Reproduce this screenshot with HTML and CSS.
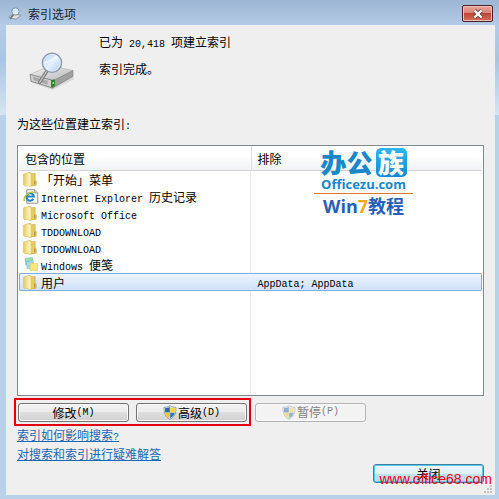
FILE: index.html
```html
<!DOCTYPE html>
<html lang="zh-CN">
<head>
<meta charset="utf-8">
<title>索引选项</title>
<link rel="stylesheet" href="styles.css">
</head>
<body>
<svg class="defs" aria-hidden="true">
  <defs>
    <linearGradient id="fold" x1="0" x2="1" y1="0" y2="0">
      <stop offset="0" stop-color="#e6cd62"/><stop offset=".55" stop-color="#f6e79a"/><stop offset="1" stop-color="#d3b142"/>
    </linearGradient>
    <linearGradient id="metal" x1="0" x2="1" y1="0" y2="1">
      <stop offset="0" stop-color="#f6f6f6"/><stop offset="1" stop-color="#b4b4b4"/>
    </linearGradient>
    <linearGradient id="glass" x1="0" x2="1" y1="0" y2="1">
      <stop offset="0" stop-color="#b5cdf0"/><stop offset=".5" stop-color="#e6f1fc"/><stop offset="1" stop-color="#a9c9ee"/>
    </linearGradient>
    <symbol id="folder" viewBox="1.5 .5 13 15.5" preserveAspectRatio="none">
      <path d="M2 2.500 8 .8l.8.7v13.200L3 14.500l-1-.9z" fill="url(#fold)" stroke="#d6bd5f" stroke-width=".6"/>
      <path d="M7.500 2.500 12.800 2v7l1 .5v4.600l-6.300 1.300z" fill="#e8cb5e" stroke="#c8a845" stroke-width=".6"/>
      <path d="M6.400 1.500 8.600 2v13.400l-2.200-1.200z" fill="#fbf3c5"/>
      <path d="M12.400 9.500v4" stroke="#9c8544" stroke-width=".9"/>
    </symbol>
    <symbol id="drive" viewBox="0 0 48 40">
      <path d="M2 28 24 36 47 25v3L25 39 3 31z" fill="#c9c9c9" opacity=".6"/>
      <path d="M2 23 23 14l23 5-21 11z" fill="url(#metal)" stroke="#b0b0b0" stroke-width=".6"/>
      <path d="m2 23 23 6v8L3 30z" fill="#d0d0d0" stroke="#777" stroke-width=".8"/>
      <path d="m5 25.500 15 4v4L6 29z" fill="#a8a8a8"/>
      <path d="m25 30 21-11v6L25 37z" fill="#a0a0a0" stroke="#777" stroke-width=".6"/>
      <path d="m23.500 29 4-1v7l-4 1.500z" fill="#26852d"/>
      <path d="m25 31 1.500-.5v2l-1.500.5z" fill="#9cf086"/>
      <path d="m19 20-7 11" stroke="#777" stroke-width="3.400" stroke-linecap="round"/>
      <path d="m19 20-7 11" stroke="#c8c8c8" stroke-width="1.400" stroke-linecap="round"/>
      <circle cx="24.500" cy="11" r="9.800" fill="url(#glass)" stroke="#8b9aab" stroke-width="1.600"/>
      <path d="M17 11c4-1 9-3 13-7" stroke="#fff" stroke-width="2" fill="none" opacity=".6"/>
      <circle cx="24.500" cy="11" r="8.600" fill="none" stroke="#e8f2fb" stroke-width=".7"/>
    </symbol>
    <symbol id="shield" viewBox="0 0 14 15">
      <path d="M7 .7C5 2 3 2.300 1 2.300c0 6 1 9.500 6 12 5-2.500 6-6 6-12-2 0-4-.3-6-1.600z" fill="#e8edf0" stroke="#80909b" stroke-width=".8"/>
      <path d="M6.800 2v5.500H2.200C2 6 2 4.500 2 3.200 4 3.100 5.500 2.700 6.800 2z" fill="#2866b7"/>
      <path d="M7.200 2v5.500h4.600c.2-1.500.2-3 .2-4.300-2-.1-3.500-.5-4.800-1.200z" fill="#f3d53d"/>
      <path d="M6.800 7.700v5.500C4 11.700 2.600 10 2.200 7.700z" fill="#f0c32f"/>
      <path d="M7.200 7.700v5.500c2.800-1.500 4.200-3.200 4.600-5.500z" fill="#3272be"/>
    </symbol>
  </defs>
</svg>

<div class="window">
  <header class="titlebar">
    <svg class="title-icon" viewBox="0 0 14 13"><path d="M1 9.500 7 7l6 1.500-5 3.700-7-1.500z" fill="#dedede" stroke="#8a8f96" stroke-width=".8"/><path d="m5.500 7.500-3 4" stroke="#6e747c" stroke-width="1.500" stroke-linecap="round"/><circle cx="7.500" cy="4.500" r="3.700" fill="#dcebfa" stroke="#7f90a5"/></svg>
    <h1>索引选项</h1>
    <button class="close-x" aria-label="关闭窗口">
      <svg viewBox="0 0 12 10" width="12" height="10"><path d="m2.500 1.500 7 7m0-7-7 7" stroke="#684450" stroke-width="4"/><path d="m2.500 1.500 7 7m0-7-7 7" stroke="#fff" stroke-width="2.400"/></svg>
    </button>
  </header>

  <main class="client">
    <section class="status">
      <svg class="drive"><use href="#drive"/></svg>
      <div>
        <p>已为<span class="en"> 20,418 </span>项建立索引</p>
        <p>索引完成。</p>
      </div>
    </section>

    <h2 id="locations">为这些位置建立索引<span class="en">:</span></h2>

    <div class="list">
      <table aria-labelledby="locations">
        <thead><tr><th>包含的位置</th><th>排除</th></tr></thead>
        <tbody>
          <tr><td><svg class="icon folder"><use href="#folder"/></svg>「开始」菜单</td><td></td></tr>
          <tr><td><svg class="icon" viewBox="0 0 16 16"><path d="M3.500.8h8.700l3 3v11.400H3.500z" fill="#fff" stroke="#8c8c8c"/><path d="M12 .8v3.400h3.200" fill="#eee" stroke="#8c8c8c"/><path d="M10.500 10.500A4 4 0 1 1 11 8H4" fill="none" stroke="#2585c5" stroke-width="2.200"/><path d="M1 13C-1 8 6 2 11.500 3.500" fill="none" stroke="#b7cb38" stroke-width="1.400"/></svg><span class="en">Internet Explorer </span>历史记录</td><td></td></tr>
          <tr><td><svg class="icon folder"><use href="#folder"/></svg><span class="en">Microsoft Office</span></td><td></td></tr>
          <tr><td><svg class="icon folder"><use href="#folder"/></svg><span class="en">TDDOWNLOAD</span></td><td></td></tr>
          <tr><td><svg class="icon folder"><use href="#folder"/></svg><span class="en">TDDOWNLOAD</span></td><td></td></tr>
          <tr><td><svg class="icon" viewBox="0 0 16 16"><path d="m1.500 1.500 8-1 1 7-8 1z" fill="#94dcb1" stroke="#6fc294" stroke-width=".6"/><path d="m3 5 7-1 1 7.500-7 1z" fill="#a7d7f2" stroke="#76b3d8" stroke-width=".6"/><path d="m7.500 6.500 7.500.5v7.500l-8-.5z" fill="#f7e680" stroke="#dcc65a" stroke-width=".6"/></svg><span class="en">Windows </span>便笺</td><td></td></tr>
          <tr class="selected"><td><svg class="icon folder"><use href="#folder"/></svg>用户</td><td><span class="en">AppData; AppData</span></td></tr>
        </tbody>
      </table>
      <div class="brand">
        <div class="brand-name">办公<span class="brand-tile">族</span></div>
        <div class="brand-site">Officezu.com</div>
        <div class="brand-topic">Win<span class="seven">7</span>教程</div>
      </div>
    </div>

    <div class="actions">
      <div class="marked">
        <button class="btn">修改<span class="en">(M)</span></button>
        <button class="btn"><svg class="shield"><use href="#shield"/></svg>高级<span class="en">(D)</span></button>
      </div>
      <button class="btn" disabled><svg class="shield"><use href="#shield"/></svg>暂停<span class="en">(P)</span></button>
    </div>

    <nav class="links">
      <a href="#">索引如何影响搜索<span class="en">?</span></a>
      <a href="#">对搜索和索引进行疑难解答</a>
    </nav>

    <footer><button class="btn default">关闭</button></footer>
    <svg class="grip" viewBox="0 0 8 8"><path d="M6 0h2v2H6zM3 3h2v2H3zM6 3h2v2H6zM0 6h2v2H0zM3 6h2v2H3zM6 6h2v2H6z" fill="#c2c2c2"/></svg>
    <div class="watermark">www.office68.com</div>
  </main>
</div>
</body>
</html>
```
FILE: styles.css
```css
* { box-sizing: border-box; }

body {
  margin: 0;
  font: 12px/16px "Noto Sans CJK SC", sans-serif;
  color: #000;
}

h1, h2, p { margin: 0; font-size: 12px; font-weight: 400; }

.defs { position: absolute; width: 0; height: 0; }

.en { font: 10px/10px "Liberation Mono", monospace; white-space: pre; }

.window {
  display: flex;
  flex-direction: column;
  min-height: 100vh;
  padding: 0 4px 4px 6px;
  background: linear-gradient(#9cb6d3 0, #b4cbe6 25px, #a9c5e3 60px, #d6e4f3 115px, #b9d0e9 115px);
}

.titlebar { display: flex; align-items: center; height: 25px; padding: 0 2px; gap: 6px; }
.titlebar h1 { flex: 1; padding-top: 2px; color: #1b2430; }
.title-icon { width: 14px; height: 13px; margin-top: 2px; }

.close-x {
  display: flex;
  align-items: center;
  justify-content: center;
  width: 31px;
  height: 17px;
  margin-top: 2px;
  padding: 0;
  border: 1px solid #4c1f2b;
  border-radius: 2px;
  background: linear-gradient(#e9a397 0, #d98274 50%, #bf4634 50%, #d4715c);
  box-shadow: inset 0 0 0 1px #f0c0b8;
}

.client {
  position: relative;
  flex: 1;
  display: flex;
  flex-direction: column;
  padding: 9px 11px 12px;
  background: #efefef;
}

.status { display: flex; gap: 24px; padding-left: 11px; }
.status p { padding-bottom: 11px; }
.drive { width: 47px; height: 39px; margin-top: 18px; }
.client h2 { margin-top: 25px; }

.list {
  position: relative;
  flex: 1;
  margin-top: 13px;
  padding: 0 1px;
  border: 1px solid #828790;
  background: linear-gradient(90deg, transparent 50%, #ececec 50%, #ececec calc(50% + 1px), transparent calc(50% + 1px)) #fff;
}

table { width: 100%; table-layout: fixed; border-spacing: 0; }

th {
  height: 25px;
  padding: 2px 6px 0;
  border-bottom: 1px solid #d5d5d5;
  background: linear-gradient(#fff 40%, #f1f2f4);
  font-weight: 400;
  text-align: left;
}
th + th { border-left: 1px solid #dedfe1; }

td { height: 17px; padding: 0 4px; line-height: 15px; white-space: nowrap; }
td + td { padding: 0 7px; }
td .icon { width: 16px; height: 15px; margin-right: 2px; vertical-align: top; }
td .folder { width: 14px; margin-right: 4px; }

.selected td {
  border: 1px solid #84acdd;
  border-width: 1px 0;
  background: linear-gradient(#edf4fd, #cfe2f9);
}
.selected td:first-child { border-left-width: 1px; border-radius: 2px 0 0 2px; padding-left: 3px; }
.selected td:last-child { border-right-width: 1px; border-radius: 0 2px 2px 0; }

.brand {
  position: absolute;
  top: 2px;
  right: 70px;
  width: 99px;
  text-align: center;
  font-weight: 700;
  color: #1888cb;
}
.brand-name {
  display: flex;
  justify-content: center;
  gap: 3px;
  font-size: 26px;
  line-height: 28px;
  font-weight: 900;
}
.brand-tile {
  width: 31px;
  height: 29px;
  border-radius: 5px;
  background: linear-gradient(#31b5ee, #1387d6);
  color: #fff;
  line-height: 28px;
}
.brand-site { padding-bottom: 2px; border-bottom: 1px solid #e0782c; font: 700 13px/14px "Open Sans", sans-serif; }
.brand-topic { font: 700 18px/24px "Open Sans", "Noto Sans CJK SC", sans-serif; color: #285fb4; }
.seven { color: #f5a623; }

.actions { display: flex; align-items: center; gap: 4px; margin: 2px 0 0 -3px; }
.marked { display: flex; gap: 7px; padding: 3px 2px 2px; border: 2px solid #e2000f; }

.btn {
  display: flex;
  align-items: center;
  justify-content: center;
  width: 111px;
  height: 19px;
  padding: 0;
  border: 1px solid #747474;
  border-radius: 3px;
  background: linear-gradient(#f3f3f3 0, #ebebeb 50%, #dedede 50%, #d0d0d0);
  box-shadow: inset 0 0 0 1px #fafafa;
  color: #000;
  font: inherit;
}
.btn:disabled { border-color: #b3b3b3; background: #f3f3f3; color: #838383; }
.btn:disabled .shield { opacity: .5; }
.shield { width: 14px; height: 15px; margin-right: 1px; }

.btn.default {
  border-color: #3d7f9f;
  background: linear-gradient(#ecf6fa 0, #def0f7 50%, #c4e2ef 50%, #b5dbeb);
  box-shadow: inset 0 0 0 1px #55cdf0;
}

.links { display: flex; flex-direction: column; align-items: flex-start; gap: 3px; margin-top: 1px; }
.links a { color: #1c66b2; }

footer { display: flex; justify-content: flex-end; margin-top: 2px; }

.grip { position: absolute; right: 3px; bottom: 2px; width: 8px; height: 8px; }

.watermark {
  position: absolute;
  right: 3px;
  bottom: 8px;
  font: 14px/16px "Liberation Sans", sans-serif;
  color: #f5001c;
}
```
